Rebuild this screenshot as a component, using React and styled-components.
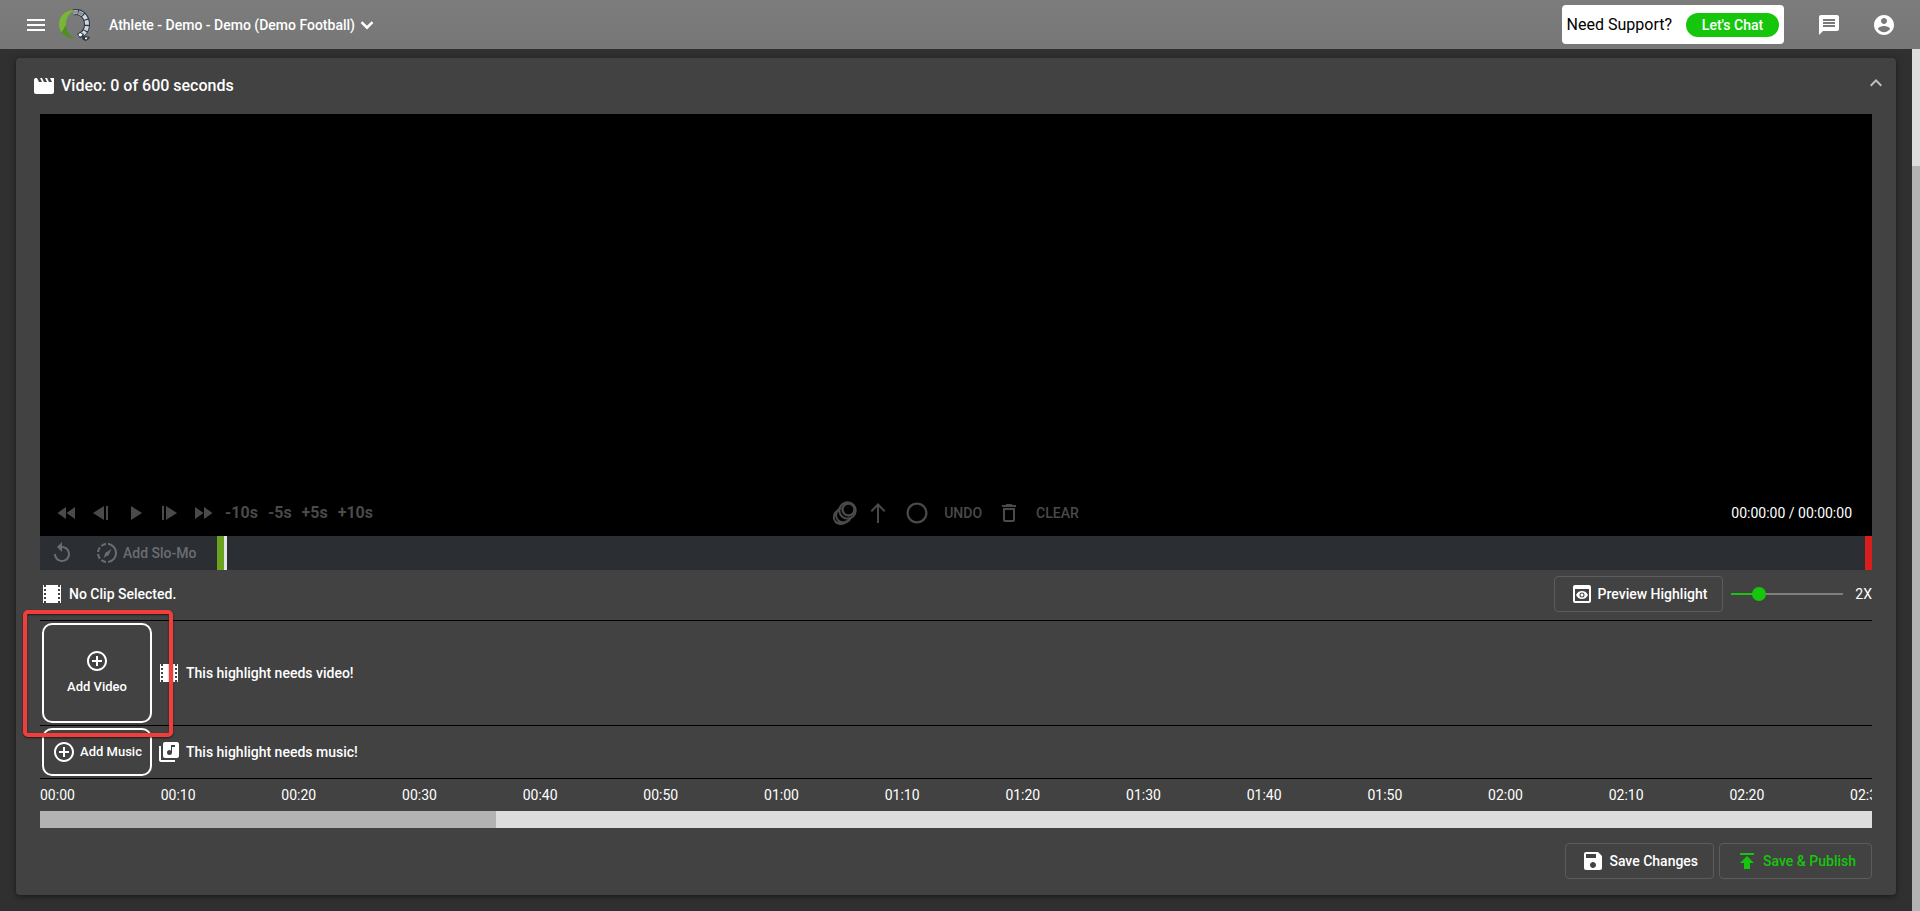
import React from "react";
import styled, { createGlobalStyle } from "styled-components";

const Global = createGlobalStyle`
  * { box-sizing: border-box; }
  body { margin: 0; background: #303030; color: #fff; font-family: Roboto, "Liberation Sans", sans-serif; font-size: 14px; line-height: 20px; }
  button, input { font: inherit; color: inherit; }
  h2 { margin: 0; font-size: 16px; font-weight: 500; line-height: 24px; }
  p { margin: 0; }
`;

const paths = {
  menu: "M3 6h18v2H3V6zm0 5h18v2H3v-2zm0 5h18v2H3v-2z",
  down: "M7.41 8.2 12 12.8l4.59-4.6L18.4 10 12 16.4 5.600 10l1.81-1.8z",
  up: "M7.41 15.41 12 10.83l4.59 4.58L18 14l-6-6-6 6 1.41 1.41z",
  message: "M20 2H4c-1.1 0-1.99.9-1.99 2L2 22l4-4h14c1.1 0 2-.9 2-2V4c0-1.1-.9-2-2-2zm-2 12H6v-2h12v2zm0-3H6V9h12v2zm0-3H6V6h12v2z",
  account: "M12 2C6.48 2 2 6.48 2 12s4.48 10 10 10 10-4.48 10-10S17.52 2 12 2zm0 3c1.66 0 3 1.34 3 3s-1.34 3-3 3-3-1.34-3-3 1.34-3 3-3zm0 14.2c-2.5 0-4.71-1.28-6-3.22.03-1.99 4-3.08 6-3.08 1.99 0 5.97 1.09 6 3.08-1.29 1.94-3.5 3.22-6 3.22z",
  movie: "M18 4l2 4h-3l-2-4h-2l2 4h-3l-2-4H8l2 4H7L5 4H4c-1.1 0-1.99.9-1.99 2L2 18c0 1.1.9 2 2 2h16c1.1 0 2-.9 2-2V4h-4z",
  rewind: "M11 18V6l-8.5 6 8.5 6zm.5-6 8.5 6V6l-8.5 6z",
  forward: "M4 18l8.5-6L4 6v12zm9-12v12l8.5-6L13 6z",
  stepBack: "M19 5v14h-2V5h2zm-4 0v14L4 12 15 5z",
  stepForward: "M5 5v14h2V5H5zm4 0v14l11-7L9 5z",
  play: "M8 5v14l11-7z",
  arrow: "M13 22V6l5 5 1.4-1.4L12 2 4.6 9.6 6 11l5-5v16h2z",
  circle: "M12 1.500C6.200 1.500 1.500 6.200 1.500 12S6.200 22.500 12 22.500 22.500 17.800 22.500 12 17.800 1.500 12 1.500zm0 18.700c-4.500 0-8.200-3.700-8.200-8.200S7.500 3.800 12 3.800s8.200 3.700 8.200 8.200-3.700 8.200-8.200 8.200z",
  trash: "M6 19c0 1.1.9 2 2 2h8c1.1 0 2-.9 2-2V7H6v12zM8 9h8v10H8V9zm7.5-5l-1-1h-5l-1 1H5v2h14V4h-3.5z",
  replay: "M12 5V1L7 6l5 5V7c3.31 0 6 2.69 6 6s-2.69 6-6 6-6-2.69-6-6H4c0 4.42 3.58 8 8 8s8-3.58 8-8-3.58-8-8-8z",
  slow: "M16.500 8l-2.600 5.600a2.100 2.100 0 0 1-2.300 1.300L8.500 17l1.400-3.600a2 2 0 0 1 1-2L16.500 8zM11 4.07V2.05c-2.01.2-3.84 1-5.32 2.21L7.1 5.69C8.21 4.83 9.54 4.25 11 4.07zM5.69 7.1L4.26 5.68C3.05 7.16 2.25 8.99 2.05 11h2.02c.18-1.46.76-2.79 1.62-3.9zM4.07 13H2.05c.2 2.01 1 3.84 2.21 5.32l1.43-1.43c-.86-1.1-1.44-2.43-1.62-3.89zm1.61 6.74C7.16 20.95 9 21.75 11 21.95v-2.02c-1.46-.18-2.79-.76-3.9-1.62l-1.42 1.43zM22 12c0 5.16-3.92 9.42-8.95 9.95v-2.02C16.97 19.41 20 16.05 20 12s-3.03-7.41-6.95-7.93V2.05C18.08 2.58 22 6.84 22 12z",
  film: "M3 3h1v2h2V3h12v2h2V3h1v18h-1v-2h-2v2H6v-2H4v2H3V3zm1 4v2h2V7H4zm0 4v2h2v-2H4zm0 4v2h2v-2H4zM18 7v2h2V7h-2zm0 4v2h2v-2h-2zm0 4v2h2v-2h-2z",
  addCircle: "M13 7h-2v4H7v2h4v4h2v-4h4v-2h-4V7zm-1-5C6.48 2 2 6.48 2 12s4.48 10 10 10 10-4.48 10-10S17.52 2 12 2zm0 18c-4.41 0-8-3.59-8-8s3.59-8 8-8 8 3.59 8 8-3.59 8-8 8z",
  library: "M20 2H8c-1.1 0-2 .9-2 2v12c0 1.1.9 2 2 2h12c1.1 0 2-.9 2-2V4c0-1.1-.9-2-2-2zm-2 5h-3v5.5a2.5 2.5 0 1 1-2.5-2.5c.57 0 1.08.19 1.5.51V5h4v2zM4 6H2v14c0 1.1.9 2 2 2h14v-2H4V6z",
  preview: "M19 3H5c-1.11 0-2 .9-2 2v14c0 1.1.89 2 2 2h14c1.1 0 2-.9 2-2V5c0-1.1-.89-2-2-2zm0 16H5V7h14v12zm-5.5-6c0 .83-.67 1.5-1.5 1.5s-1.5-.67-1.5-1.5.67-1.5 1.5-1.5 1.5.67 1.5 1.5zM12 9c-2.73 0-5.06 1.66-6 4 .94 2.34 3.27 4 6 4s5.06-1.66 6-4c-.94-2.34-3.27-4-6-4zm0 6.5a2.5 2.5 0 1 1 0-5 2.5 2.5 0 0 1 0 5z",
  save: "M17 3H5c-1.11 0-2 .9-2 2v14c0 1.1.89 2 2 2h14c1.1 0 2-.9 2-2V7l-4-4zm-5 16c-1.66 0-3-1.34-3-3s1.34-3 3-3 3 1.34 3 3-1.34 3-3 3zm3-10H5V5h10v4z",
  publish: "M5 4v2h14V4H5zm0 10h4v6h6v-6h4l-7-7-7 7z",
};

const Svg = styled.svg`
  display: block;
  flex: none;
  width: 24px;
  height: 24px;
  fill: currentColor;
`;
const Icon = ({ name }) => (
  <Svg viewBox="0 0 24 24" aria-hidden="true">
    <path fillRule="evenodd" d={paths[name]} />
  </Svg>
);
const Ellipses = () => (
  <Svg viewBox="0 0 24 24" aria-hidden="true">
    <g fill="none" stroke="currentColor" strokeWidth="2">
      <circle cx="15.500" cy="8.500" r="6" strokeWidth="2.400" />
      <circle cx="14.500" cy="9.500" r="8.200" />
      <path d="M8 7a7.500 7.500 0 1 0 9.500 10" />
      <path d="M5.500 9.500A7 7 0 1 0 14 19.500" />
      <path d="M2 21.500h10" />
    </g>
  </Svg>
);

const Page = styled.div`
  display: flex;
  flex-direction: column;
  min-height: 100vh;
`;
const Header = styled.header`
  display: flex;
  align-items: center;
  height: 49px;
  padding: 0 24px;
  background: linear-gradient(#7c7c7c, #777);
`;
const Plain = styled.button`
  display: flex;
  align-items: center;
  gap: ${(p) => p.$gap || 0}px;
  padding: 0;
  border: 0;
  background: none;
  font-weight: 500;
  white-space: nowrap;
`;
const LogoLink = styled.a`
  display: block;
  margin: 0 18px 0 11px;
`;
const Support = styled.div`
  display: flex;
  align-items: center;
  gap: 14px;
  height: 39px;
  margin-left: auto;
  padding: 0 5px;
  border-radius: 4px;
  background: #fff;
  color: #000;
  font-size: 16px;
`;
const ChatButton = styled.button`
  width: 93px;
  height: 24px;
  padding: 0;
  border: 0;
  border-radius: 12px;
  background: #16c60c;
  color: #fff;
  font-size: 14px;
  font-weight: 500;
`;
const HeaderIcons = styled.div`
  display: flex;
  gap: 31px;
  margin-left: 33px;
`;

const Body = styled.div`
  display: flex;
  flex: 1;
`;
const Main = styled.main`
  flex: 1;
  min-width: 0;
  padding: 9px 16px 16px;
`;
const Track = styled.div`
  display: flex;
  flex-direction: column;
  width: 8px;
  padding-top: 117px;
  background: #ddd;
`;
const Thumb = styled.div`
  flex: 1;
  background: #b3b3b3;
`;
const Card = styled.section`
  padding: 0 24px 16px;
  border-radius: 4px;
  background: #424242;
  box-shadow: 0 2px 4px rgba(0, 0, 0, 0.3), 0 1px 8px rgba(0, 0, 0, 0.2);
`;
const CardHead = styled.div`
  display: flex;
  align-items: center;
  justify-content: space-between;
  height: 56px;
  margin: 0 -16px 0 -8px;
`;
const Title = styled.div`
  display: flex;
  align-items: center;
  gap: 5px;
`;
const Collapse = styled(Plain)`
  align-self: flex-start;
  margin-top: 13px;
  color: #c0c0c0;
`;
const Screen = styled.div`
  display: flex;
  align-items: flex-end;
  height: 422px;
  padding: 0 15px;
  background: #000;
`;
const Controls = styled.div`
  display: grid;
  grid-template-columns: 1fr auto 1fr;
  align-items: center;
  width: 100%;
  height: 46px;
  color: #4a4a4a;
`;
const Group = styled.div`
  display: flex;
  align-items: center;
  gap: ${(p) => p.$gap}px;
`;
const Skip = styled(Plain)`
  font-size: 16px;
  font-weight: 700;
`;
const Time = styled.span`
  justify-self: end;
  padding-right: 5px;
  color: #fff;
`;
const TrimBar = styled.div`
  display: flex;
  align-items: center;
  height: 34px;
  background: #2b2e33;
  color: #6b6d70;
`;
const TrimTools = styled.div`
  display: flex;
  gap: 21px;
  width: 177px;
  padding-left: 10px;
`;
const Handle = styled.div`
  align-self: stretch;
  width: 7px;
  margin-left: ${(p) => (p.$end ? "auto" : 0)};
  background: ${(p) => p.$color};
`;
const Playhead = styled(Handle)`
  width: 3px;
`;
const ClipRow = styled.div`
  display: flex;
  align-items: center;
  justify-content: space-between;
  height: 50px;
  padding-bottom: 2px;
`;
const Note = styled.p`
  display: flex;
  align-items: center;
  gap: 5px;
  font-weight: 500;
`;
const Outlined = styled.button`
  display: flex;
  align-items: center;
  justify-content: center;
  gap: 4px;
  height: 36px;
  padding: 0 15px;
  border: 1px solid #5c5c5c;
  border-radius: 4px;
  background: none;
  color: ${(p) => p.$color || "#fff"};
  font-weight: 500;
  white-space: nowrap;
`;
const Zoom = styled.label`
  display: flex;
  align-items: center;
  gap: 12px;
`;
const Range = styled.input`
  appearance: none;
  width: 112px;
  height: 14px;
  margin: 0;
  background: linear-gradient(90deg, #16c60c 25%, #7f7f7f 25%) center / 100% 2px no-repeat;
  &::-webkit-slider-thumb {
    appearance: none;
    width: 14px;
    height: 14px;
    border-radius: 50%;
    background: #16c60c;
  }
`;
const Lane = styled.div`
  position: relative;
  display: flex;
  align-items: center;
  gap: 5px;
  padding: 2px;
  border-top: 1px solid #000;
`;
const AddButton = styled.button`
  display: flex;
  flex-direction: ${(p) => (p.$tall ? "column" : "row")};
  align-items: center;
  justify-content: center;
  gap: 4px;
  width: 110px;
  height: ${(p) => (p.$tall ? 100 : 48)}px;
  padding: 0;
  border: 2px solid #fff;
  border-radius: 10px;
  background: none;
  font-size: 13px;
  font-weight: 500;
  line-height: 20px;
  white-space: nowrap;
`;
const Highlight = styled.div`
  position: absolute;
  z-index: 1;
  top: -11px;
  left: -17px;
  width: 150px;
  height: 127px;
  border: 4px solid #f23d3d;
  border-radius: 5px;
  box-shadow: 0 1px 2px rgba(0, 0, 0, 0.6), inset 0 1px 2px rgba(0, 0, 0, 0.6);
  pointer-events: none;
`;
const Ruler = styled.div`
  display: flex;
  height: 33px;
  padding-top: 6px;
  border-top: 1px solid #000;
  overflow: hidden;
`;
const Tick = styled.span`
  flex: 0 0 6.587%;
`;
const Scroller = styled.div`
  height: 17px;
  background: #ddd;
`;
const ScrollThumb = styled.div`
  width: 24.9%;
  height: 100%;
  background: #b3b3b3;
`;
const Actions = styled.div`
  display: flex;
  justify-content: flex-end;
  gap: 5px;
  margin-top: 15px;
`;

const Logo = () => (
  <svg width="32" height="32" viewBox="0 0 32 32" aria-hidden="true" display="block">
    <path d="M14 3.500c8-2 14 4 14 12 0 5-2 8-6 11" fill="none" stroke="#2b3744" strokeWidth="6" />
    <path d="M14 3.500c8-2 14 4 14 12 0 5-2 8-6 11" fill="none" stroke="#d3d6dc" strokeWidth="4" strokeDasharray="4.500 1.200" />
    <path d="M14 3.500c4-1 7 0 9.500 2.200" fill="none" stroke="#8d9098" strokeWidth="3" strokeDasharray="4.500 1.200" />
    <path d="M18 25l3-2 4 2-1 3-3 1zM23 29l3-2 5 1-1 2-3 2-3-1z" fill="#2b3744" />
    <path d="M19.500 25l2-1 2 1.500-1.500 2-2-.5zM26 28.500l2.500 0-1 2-1.500-.5z" fill="#fff" />
    <path d="M16 1C6 1 0 7 0 15.500 0 24 6 29 16 29.500 10 27 7 22 7 15.500 7 9 10 4 16 1z" fill="#4f8f1c" />
    <path d="M16 1C6 1 0 7 0 15.500c0 3 1 6 2.500 8L7 15.500C7 9 10 4 16 1z" fill="#7ab53a" />
  </svg>
);

const ticks = Array.from({ length: 16 }, (_, i) => {
  const s = i * 10;
  return `${String(Math.floor(s / 60)).padStart(2, "0")}:${String(s % 60).padStart(2, "0")}`;
});

const transport = [
  ["rewind", "Rewind"],
  ["stepBack", "Previous frame"],
  ["play", "Play"],
  ["stepForward", "Next frame"],
  ["forward", "Fast forward"],
];

export default function App() {
  return (
    <Page>
      <Global />
      <Header>
        <Plain aria-label="Menu"><Icon name="menu" /></Plain>
        <LogoLink href="#" aria-label="Home"><Logo /></LogoLink>
        <Plain>Athlete - Demo - Demo (Demo Football)<Icon name="down" /></Plain>
        <Support>
          Need Support?
          <ChatButton>Let's Chat</ChatButton>
        </Support>
        <HeaderIcons>
          <Plain aria-label="Messages"><Icon name="message" /></Plain>
          <Plain aria-label="Account"><Icon name="account" /></Plain>
        </HeaderIcons>
      </Header>
      <Body>
        <Main>
          <Card>
            <CardHead>
              <Title><Icon name="movie" /><h2>Video: 0 of 600 seconds</h2></Title>
              <Collapse aria-label="Collapse"><Icon name="up" /></Collapse>
            </CardHead>
            <Screen>
              <Controls>
                <Group $gap={10}>
                  {transport.map(([name, label]) => (
                    <Plain key={name} aria-label={label}><Icon name={name} /></Plain>
                  ))}
                  {["-10s", "-5s", "+5s", "+10s"].map((t) => <Skip key={t}>{t}</Skip>)}
                </Group>
                <Group $gap={15}>
                  <Group $gap={9}>
                    <Plain aria-label="Spotlight trail"><Ellipses /></Plain>
                    <Plain aria-label="Arrow"><Icon name="arrow" /></Plain>
                  </Group>
                  <Plain aria-label="Circle"><Icon name="circle" /></Plain>
                  <Plain>UNDO</Plain>
                  <Plain $gap={15}><Icon name="trash" />CLEAR</Plain>
                </Group>
                <Time>00:00:00 / 00:00:00</Time>
              </Controls>
            </Screen>
            <TrimBar>
              <TrimTools>
                <Plain aria-label="Reset"><Icon name="replay" /></Plain>
                <Plain $gap={4}><Icon name="slow" />Add Slo-Mo</Plain>
              </TrimTools>
              <Handle $color="#6ba31f" />
              <Playhead $color="#e4e4e4" />
              <Handle $color="#d91e1e" $end />
            </TrimBar>
            <ClipRow>
              <Note><Icon name="film" />No Clip Selected.</Note>
              <Group $gap={8}>
                <Outlined><Icon name="preview" />Preview Highlight</Outlined>
                <Zoom>
                  <Range type="range" min="0" max="100" defaultValue="21" aria-label="Zoom" />
                  2X
                </Zoom>
              </Group>
            </ClipRow>
            <Lane>
              <Highlight />
              <AddButton $tall><Icon name="addCircle" />Add Video</AddButton>
              <Note><Icon name="film" />This highlight needs video!</Note>
            </Lane>
            <Lane>
              <AddButton><Icon name="addCircle" />Add Music</AddButton>
              <Note><Icon name="library" />This highlight needs music!</Note>
            </Lane>
            <Ruler>{ticks.map((t) => <Tick key={t}>{t}</Tick>)}</Ruler>
            <Scroller><ScrollThumb /></Scroller>
            <Actions>
              <Outlined><Icon name="save" />Save Changes</Outlined>
              <Outlined $color="#16c60c"><Icon name="publish" />Save &amp; Publish</Outlined>
            </Actions>
          </Card>
        </Main>
        <Track><Thumb /></Track>
      </Body>
    </Page>
  );
}
